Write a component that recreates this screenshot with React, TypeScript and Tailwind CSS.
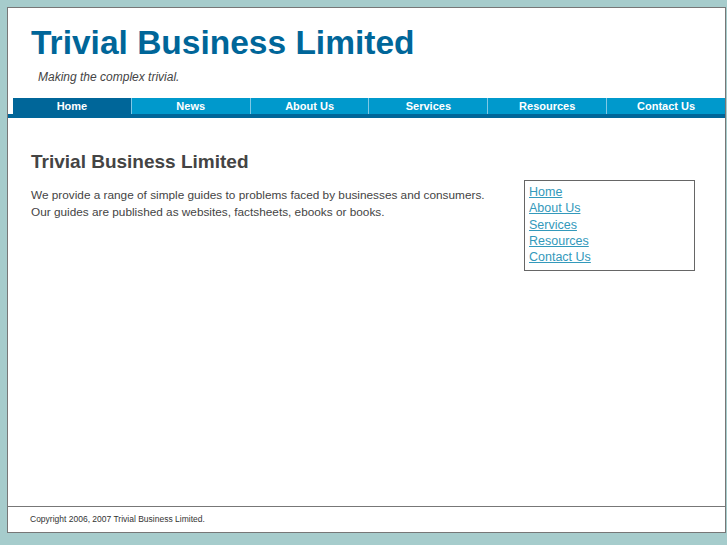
const font = { fontFamily: '"Liberation Sans", Arial, Helvetica, sans-serif' };

const tabs = ["Home", "News", "About Us", "Services", "Resources", "Contact Us"];
const side = ["Home", "About Us", "Services", "Resources", "Contact Us"];

export default function App() {
  return (
    <div className="min-h-[545px] overflow-hidden bg-[#a6cccc] pl-[7px] pt-[7px]" style={font}>
      <div className="w-[719px]">
        <div className="h-[500px] border border-[#777] bg-white">
          <header className="pl-[23px] pt-[16px]">
            <h1 className="text-[33.5px] font-bold leading-[38px] text-[#006699]">Trivial Business Limited</h1>
            <p className="mt-[8px] pl-[7px] text-[12px] italic leading-[14px] text-[#444]">
              Making the complex trivial.
            </p>
          </header>

          <nav className="mt-[14px]">
            <ul className="ml-[5px] flex">
              {tabs.map((t, i) => (
                <li
                  key={t}
                  className={`h-[16px] flex-1 text-center text-[11px] font-bold leading-[16px] text-white ${
                    i === 0 ? "bg-[#006699]" : "border-l border-[#7fc8e6] bg-[#0099cc]"
                  }`}
                >
                  {t}
                </li>
              ))}
            </ul>
            <div className="h-[4px] bg-[#006699]" />
          </nav>

          <main className="flex justify-between pl-[23px] pr-[30px] pt-[33px]">
            <div>
              <h2 className="text-[19px] font-bold leading-[22px] text-[#444]">Trivial Business Limited</h2>
              <p className="mt-[14px] text-[11.8px] leading-[17px] text-[#444]">
                We provide a range of simple guides to problems faced by businesses and consumers.
                <br />
                Our guides are published as websites, factsheets, ebooks or books.
              </p>
            </div>
            <ul className="mt-[29px] h-[91px] w-[171px] border border-[#666] px-[4px] pt-[3px]">
              {side.map((s) => (
                <li key={s} className="text-[12.5px] leading-[16.3px]">
                  <a href="#" className="text-[#3399bb] underline">
                    {s}
                  </a>
                </li>
              ))}
            </ul>
          </main>
        </div>
        <footer className="h-[26px] border-x border-b border-[#777] bg-white pl-[22px] text-[8.5px] leading-[24px] text-[#333]">
          Copyright 2006, 2007 Trivial Business Limited.
        </footer>
      </div>
    </div>
  );
}
